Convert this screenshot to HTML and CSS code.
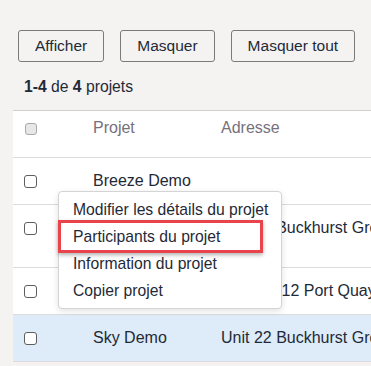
FILE: index.html
```html
<!DOCTYPE html>
<html>
<head>
<meta charset="utf-8">
<title>Projets</title>
<link rel="stylesheet" href="styles.css">
</head>
<body>
<div class="toolbar">
	<button class="btn">Afficher</button>
	<button class="btn">Masquer</button>
	<button class="btn">Masquer tout</button>
</div>
<div class="count"><b>1-4</b> de <b>4</b> projets</div>
<div class="panel">
	<table class="grid">
		<colgroup>
			<col class="c-check">
			<col class="c-name">
			<col class="c-addr">
		</colgroup>
		<thead>
			<tr>
				<th><span class="check disabled"></span></th>
				<th>Projet</th>
				<th>Adresse</th>
			</tr>
		</thead>
		<tbody>
			<tr>
				<td><span class="check"></span></td>
				<td>Breeze Demo</td>
				<td></td>
			</tr>
			<tr>
				<td><span class="check"></span></td>
				<td>Harbour View<br>Demo</td>
				<td>Unit 22 Buckhurst Grove</td>
			</tr>
			<tr>
				<td><span class="check"></span></td>
				<td>Marina Demo</td>
				<td>Level 4, 12 Port Quay</td>
			</tr>
			<tr class="selected">
				<td><span class="check"></span></td>
				<td>Sky Demo</td>
				<td>Unit 22 Buckhurst Grove</td>
			</tr>
		</tbody>
	</table>
</div>
<ul class="menu">
	<li>Modifier les détails du projet</li>
	<li>Participants du projet</li>
	<li>Information du projet</li>
	<li>Copier projet</li>
</ul>
<div class="mark"></div>
</body>
</html>
```

FILE: styles.css
```css
html, body {margin:0;padding:0;height:100%;overflow:hidden;}
body {background:#f4f3f2;font-family:"Liberation Sans", Arial, sans-serif;font-size:16px;color:#1f2a37;position:relative;}
.toolbar {display:flex;gap:16px;padding:30px 0 0 18px;}
.btn {font:inherit;font-size:15.5px;color:#1f2a37;background:#f4f3f2;border:1px solid #7a7a7a;border-radius:3px;height:32px;padding:0 16px;margin:0;line-height:30px;}
.count {padding:16px 0 0 24px;line-height:18px;height:32px;font-size:15.7px;}
.count b {font-weight:bold;}
.panel {margin-left:13px;background:#fff;border-top:1px solid #cfcfcf;width:420px;}
.grid {border-collapse:collapse;table-layout:fixed;width:100%;}
.c-check {width:80px;}
.c-name {width:128px;}
.grid th {font-weight:normal;color:#77717c;text-align:left;line-height:16px;padding:9px 0 21px 0;border-bottom:1px solid #dcdcdc;vertical-align:top;white-space:nowrap;}
.grid td {line-height:16px;padding:15px 0;border-bottom:1px solid #dcdcdc;vertical-align:top;white-space:nowrap;}
.grid th:first-child, .grid td:first-child {padding-left:11px;}
.grid tr.selected td {background:#deebf8;}
.check {display:inline-block;width:11px;height:11px;border:1px solid #5e5e5e;border-radius:3px;background:#fff;vertical-align:top;margin-top:2px;}
.check.disabled {border-color:#a9a9a9;background:#e7e7e7;width:10px;height:10px;margin:3px 0 0 1px;}
.menu {position:absolute;left:58px;top:191px;width:222px;margin:0;padding:4px 0;list-style:none;background:#fff;border:1px solid #d4d4d4;border-radius:4px;box-shadow:0 2px 6px rgba(0,0,0,.12);font-size:15.7px;}
.menu li {line-height:27px;padding-left:14px;white-space:nowrap;}
.mark {position:absolute;left:58px;top:220px;width:199px;height:27px;border:3px solid #e9434b;box-shadow:0 2px 4px rgba(0,0,0,.3);}
```
